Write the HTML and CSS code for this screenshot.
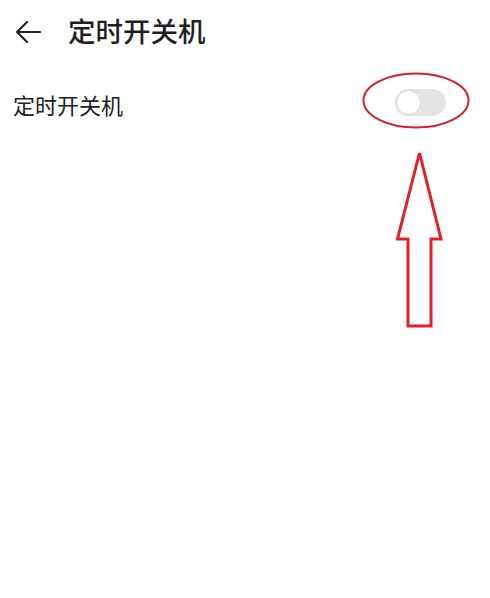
FILE: index.html
```html
<!DOCTYPE html>
<html lang="zh">
<head>
<meta charset="utf-8">
<link rel="stylesheet" href="styles.css">
</head>
<body>
<div class="page">
  <header class="topbar">
    <svg class="back" width="26" height="24" viewBox="0 0 26 24">
      <path d="M25 12 H2 M12 2 L2 12 L12 22" fill="none" stroke="#222" stroke-width="2.2" stroke-linecap="round" stroke-linejoin="round"/>
    </svg>
    <h1 class="title">定时开关机</h1>
  </header>
  <div class="row">
    <span class="label">定时开关机</span>
    <span class="switch"><span class="knob"></span></span>
  </div>
  <svg class="annot" width="490" height="598" viewBox="0 0 490 598">
    <ellipse cx="416" cy="100.5" rx="52.5" ry="27" fill="none" stroke="#d42030" stroke-width="2"/>
    <path d="M419.5 153 L441 239 L431 239 L431 326 L408 326 L408 239 L397.5 239 Z" fill="none" stroke="#e2202b" stroke-width="3" stroke-linejoin="miter"/>
  </svg>
</div>
</body>
</html>
```
FILE: styles.css
```css
html, body {
  margin: 0;
  padding: 0;
  background: #fff;
}
.page {
  position: relative;
  width: 490px;
  height: 598px;
  overflow: hidden;
  font-family: "Noto Sans CJK SC", "Noto Sans", sans-serif;
  color: #1f1f1f;
}
.topbar {
  display: flex;
  align-items: center;
  height: 64px;
  padding-left: 15px;
}
.back {
  display: block;
}
.title {
  margin: -2px 0 0 27px;
  font-size: 27.5px;
  font-weight: 500;
  line-height: 1;
  color: #1f1f1f;
}
.row {
  display: flex;
  align-items: center;
  justify-content: space-between;
  height: 54px;
  margin-top: 13px;
  padding: 0 44px 0 13px;
}
.label {
  font-size: 22px;
  line-height: 1;
  color: #222;
}
.switch {
  position: relative;
  display: block;
  width: 51px;
  height: 27px;
  border-radius: 14px;
  background: #e4e4e4;
  margin-top: -4px;
}
.knob {
  position: absolute;
  left: 1px;
  top: 1px;
  width: 23px;
  height: 23px;
  border-radius: 50%;
  background: #fff;
  border: 1px solid #d8d8d8;
}
.annot {
  position: absolute;
  left: 0;
  top: 0;
}
```
